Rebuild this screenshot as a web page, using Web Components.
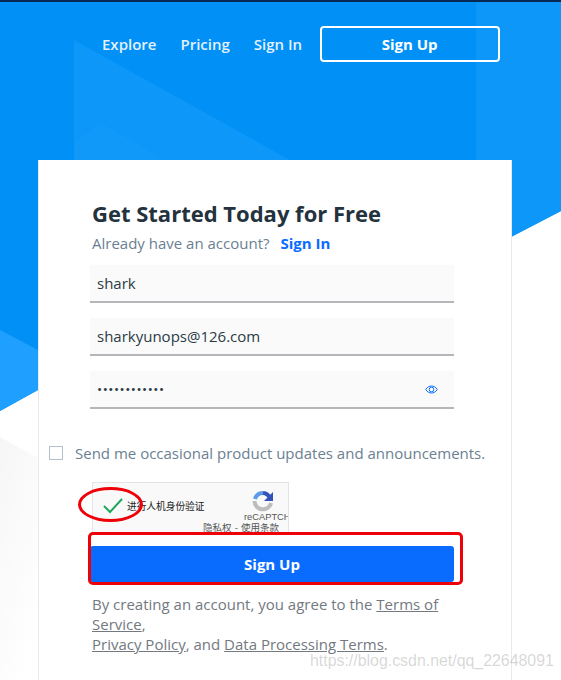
<!DOCTYPE html>
<html>
<head>
<meta charset="utf-8">
<title>Sign Up</title>
<style>
html, body { margin: 0; padding: 0; height: 680px; overflow: hidden; background: #fff; }
body { font-family: "Open Sans", "Noto Sans CJK SC", sans-serif; }
</style>
</head>
<body>
<signup-page>
    <site-nav slot="nav">
        <a>Explore</a>
        <a>Pricing</a>
        <a>Sign In</a>
        <span slot="action">Sign Up</span>
    </site-nav>
    <signup-card>
        <span slot="title">Get Started Today for Free</span>
        <span slot="sub">Already have an account?</span>
        <span slot="link">Sign In</span>
        <text-field>shark</text-field>
        <text-field>sharkyunops@126.com</text-field>
        <text-field type="password">••••••••••••</text-field>
        <check-row>Send me occasional product updates and announcements.</check-row>
        <captcha-box></captcha-box>
        <submit-button>Sign Up</submit-button>
        <legal-text>
            By creating an account, you agree to the <u>Terms of Service</u>,<br>
            <u>Privacy Policy</u>, and <u>Data Processing Terms</u>.
        </legal-text>
    </signup-card>
</signup-page>

<script>
class SignupPage extends HTMLElement {
    constructor(){
        super();
        this.attachShadow({mode: 'open'})
        this.shadowRoot.innerHTML = `
            <style>
            :host { display: block; position: relative; width: 561px; height: 680px; overflow: hidden; }
            svg { position: absolute; left: 0; top: 0; }
            main { position: relative; display: flex; flex-direction: column; height: 100%; }
            .mark {
                position: absolute; left: 310px; top: 652px;
                font: 15.9px/18px "Liberation Sans", sans-serif;
                color: rgba(150,150,150,.38); white-space: nowrap;
            }
            </style>
            <svg width="561" height="680" viewBox="0 0 561 680">
                <defs>
                    <linearGradient id="grey" x1="0" y1="0" x2="0.6" y2="1">
                        <stop offset="0" stop-color="#f6f6f6"/>
                        <stop offset="1" stop-color="#ffffff"/>
                    </linearGradient>
                </defs>
                <polygon points="0,0 561,0 561,211 511,237 38,390 0,411" fill="#0090f6"/>
                <polygon points="476,0 561,0 561,211 511,237 476,255" fill="#0c97f9"/>
                <polygon points="74,40 290,160 290,300 74,300" fill="#0c97f9"/>
                <polygon points="74,143 100,122 165,160 74,160" fill="#1199f9"/>
                <polygon points="0,330 38,350 38,390 0,411" fill="#1f9fff"/>
                <polygon points="0,437 38,458 38,680 0,680" fill="url(#grey)"/>
                <rect width="561" height="2" fill="#062a57"/>
            </svg>
            <main>
                <slot name="nav"></slot>
                <slot></slot>
            </main>
            <div class="mark">https://blog.csdn.net/qq_22648091</div>
        `
    }
}

class SiteNav extends HTMLElement {
    constructor(){
        super();
        this.attachShadow({mode: 'open'})
        this.shadowRoot.innerHTML = `
            <style>
            :host {
                display: flex; align-items: center; height: 36px;
                padding: 26px 61px 0 102px; gap: 24px;
                font-size: 15px; font-weight: 600; color: #e3f2ff; white-space: nowrap;
            }
            ::slotted(a) { line-height: 36px; }
            ::slotted([slot=action]) {
                flex: 0 0 auto; box-sizing: border-box; width: 180px; height: 36px; margin-left: -6.500px;
                border: 2px solid #fff; border-radius: 4px;
                text-align: center; line-height: 32px; font-weight: 700; color: #fff;
            }
            </style>
            <slot></slot><slot name="action"></slot>
        `
    }
}

class SignupCard extends HTMLElement {
    constructor(){
        super();
        this.attachShadow({mode: 'open'})
        this.shadowRoot.innerHTML = `
            <style>
            :host {
                display: block; box-sizing: border-box; width: 474px; height: 520px; margin: 98px 0 0 38px;
                padding: 39px 57px 0 53px;
                background: #fff; border: solid #e9e9e9; border-width: 0 1px;
            }
            h1 { margin: 0; font-size: 22px; line-height: 28px; font-weight: 700; color: #24323d; }
            p { margin: 5px 0 11px; font-size: 15px; line-height: 22px; color: #6b7f92; }
            b { margin-left: 7px; font-weight: 700; color: #0a6cff; }
            .fields { display: flex; flex-direction: column; gap: 15px; }
            </style>
            <h1><slot name="title"></slot></h1>
            <p><slot name="sub"></slot> <b><slot name="link"></slot></b></p>
            <div class="fields"><slot></slot></div>
        `
    }
}

class TextField extends HTMLElement {
    constructor(){
        super();
        this.attachShadow({mode: 'open'})
        const eye = this.getAttribute('type') === 'password' ? `
            <svg width="13" height="9" viewBox="0 0 13 9" fill="none" stroke="#0a6cff" stroke-width="1">
                <path d="M.7 4.500C2.500 1.800 4.500 1 6.500 1S10.500 1.800 12.300 4.500C10.500 7.200 8.500 8 6.500 8S2.500 7.200 .7 4.500Z"/>
                <circle cx="6.500" cy="4.500" r="2.300"/>
            </svg>` : ''
        this.shadowRoot.innerHTML = `
            <style>
            :host {
                display: flex; align-items: center; justify-content: space-between; box-sizing: border-box;
                width: 364px; height: 38px; margin-left: -2px; padding: 0 16px 0 7px;
                background: #fafafa; border-bottom: 2px solid #b5b6ba;
                font-size: 15px; color: #2b3a45;
            }
            :host([type=password]) { font-size: 13.500px; letter-spacing: .55px; }
            </style>
            <span><slot></slot></span>${eye}
        `
    }
}

class CheckRow extends HTMLElement {
    constructor(){
        super();
        this.attachShadow({mode: 'open'})
        this.shadowRoot.innerHTML = `
            <style>
            :host {
                display: flex; align-items: center; gap: 12px; width: 460px; margin: 17px 0 0 -43px;
                height: 24px; font-size: 15px; color: #6b7f92; white-space: nowrap;
            }
            i { box-sizing: border-box; flex: none; width: 14px; height: 14px; border: 1px solid #b3bfcb; }
            </style>
            <i></i><span><slot></slot></span>
        `
    }
}

class CaptchaBox extends HTMLElement {
    constructor(){
        super();
        this.attachShadow({mode: 'open'})
        this.shadowRoot.innerHTML = `
            <style>
            :host { display: block; position: relative; width: 197px; height: 51px; margin-top: 2px; }
            .frame {
                position: relative; box-sizing: border-box; height: 100%; overflow: hidden;
                background: #f9f9f9; border: 1px solid #e4e4e4; border-bottom: 0;
                font-family: "Noto Sans CJK SC", sans-serif; color: #222;
            }
            .row { display: flex; align-items: center; gap: 4px; padding: 13px 0 0 10px; font-size: 9.700px; line-height: 20px; }
            .logo { position: absolute; left: 159px; top: 7px; }
            .brand { position: absolute; left: 151px; top: 28px; font: 9.300px/12px "Liberation Sans", sans-serif; color: #555; white-space: nowrap; }
            .links { position: absolute; left: 110px; top: 37px; font-size: 9.500px; line-height: 14px; word-spacing: 1px; color: #555; white-space: nowrap; }
            .ring {
                position: absolute; left: -14px; top: 5px; width: 65px; height: 35px; box-sizing: border-box;
                border: 3px solid #ee0008; border-radius: 50%;
            }
            </style>
            <div class="frame">
                <div class="row">
                    <svg width="20" height="16" viewBox="0 0 20 16" fill="none" stroke="#1fa85c" stroke-width="2"><path d="M1 8L7 14L19 1"/></svg>
                    <span>进行人机身份验证</span>
                </div>
                <svg class="logo" width="22" height="22" viewBox="0 0 22 22" fill="none" stroke-width="4">
                    <path d="M3 9A8.500 8.500 0 0 1 11 3" stroke="#5b9bea"/>
                    <path d="M11 3A8.500 8.500 0 0 1 18 8" stroke="#3453b8"/>
                    <path d="M19 13A8.500 8.500 0 0 1 5 17A8.500 8.500 0 0 1 2.500 11" stroke="#bdbdbd"/>
                    <path d="M21 2V11H12Z" fill="#3453b8" stroke="none"/>
                </svg>
                <div class="brand">reCAPTCHA</div>
                <div class="links">隐私权 - 使用条款</div>
            </div>
            <div class="ring"></div>
        `
    }
}

class SubmitButton extends HTMLElement {
    constructor(){
        super();
        this.attachShadow({mode: 'open'})
        this.shadowRoot.innerHTML = `
            <style>
            :host {
                display: block; position: relative; box-sizing: border-box; width: 364px; height: 36px;
                margin: -2px 0 0 -2px; border-radius: 3px; background: #0a6cff; color: #fff;
                text-align: center; font-size: 15px; font-weight: 700; line-height: 37px;
            }
            .note {
                position: absolute; left: -2px; right: -9px; top: -14px; bottom: -3px;
                border: 3px solid #ee0008; border-radius: 5px;
            }
            </style>
            <slot></slot><div class="note"></div>
        `
    }
}

class LegalText extends HTMLElement {
    constructor(){
        super();
        this.attachShadow({mode: 'open'})
        this.shadowRoot.innerHTML = `
            <style>
            :host { display: block; margin-top: -3px; width: 360px; font-size: 15px; line-height: 20px; color: #73797f; }
            </style>
            <slot></slot>
        `
    }
}

customElements.define('signup-page', SignupPage)
customElements.define('site-nav', SiteNav)
customElements.define('signup-card', SignupCard)
customElements.define('text-field', TextField)
customElements.define('check-row', CheckRow)
customElements.define('captcha-box', CaptchaBox)
customElements.define('submit-button', SubmitButton)
customElements.define('legal-text', LegalText)
</script>
</body>
</html>
